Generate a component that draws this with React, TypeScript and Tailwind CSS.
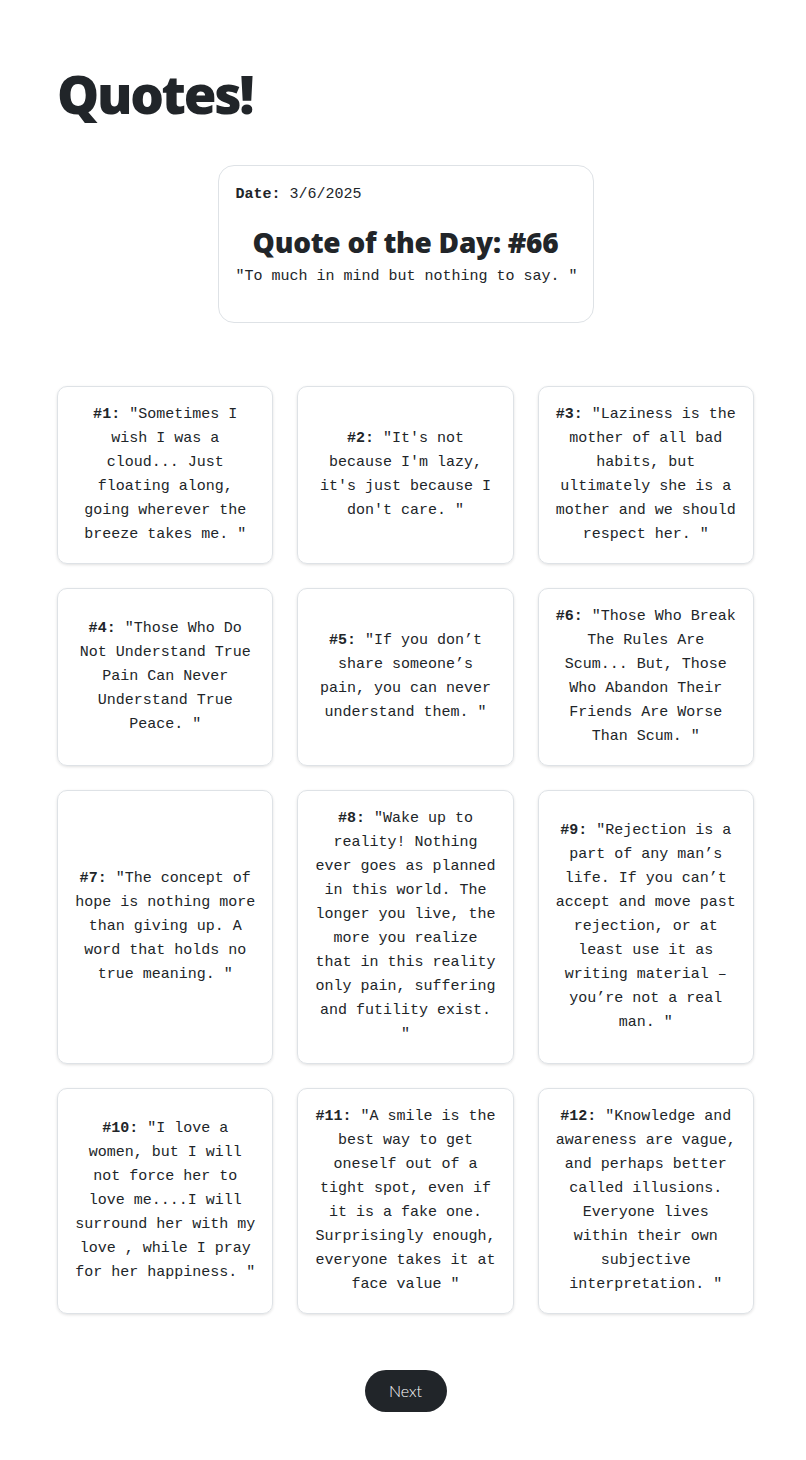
const QUOTES: string[] = [
  "Sometimes I wish I was a cloud... Just floating along, going wherever the breeze takes me.",
  "It's not because I'm lazy, it's just because I don't care.",
  "Laziness is the mother of all bad habits, but ultimately she is a mother and we should respect her.",
  "Those Who Do Not Understand True Pain Can Never Understand True Peace.",
  "If you don’t share someone’s pain, you can never understand them.",
  "Those Who Break The Rules Are Scum... But, Those Who Abandon Their Friends Are Worse Than Scum.",
  "The concept of hope is nothing more than giving up. A word that holds no true meaning.",
  "Wake up to reality! Nothing ever goes as planned in this world. The longer you live, the more you realize that in this reality only pain, suffering and futility exist.",
  "Rejection is a part of any man’s life. If you can’t accept and move past rejection, or at least use it as writing material – you’re not a real man.",
  "I love a women, but I will not force her to love me....I will surround her with my love , while I pray for her happiness.",
  "A smile is the best way to get oneself out of a tight spot, even if it is a fake one. Surprisingly enough, everyone takes it at face value",
  "Knowledge and awareness are vague, and perhaps better called illusions. Everyone lives within their own subjective interpretation.",
];

const mono = "font-['Liberation_Mono','DejaVu_Sans_Mono',monospace]";

export default function App() {
  return (
    <div className="min-h-[1460px] bg-white text-[#212529] pl-[57px] pr-[52px] pt-[62px] pb-[48px]">
      <h1 className="font-['Noto_Sans',sans-serif] font-black text-[53px] leading-[1.2] tracking-[-2.3px]">Quotes!</h1>

      <div className={`${mono} mx-auto mt-[39px] w-[376px] rounded-[16px] border border-[#dee2e6] px-[17px] pt-[17px] pb-[33px] text-[15px] leading-[24px]`}>
        <div>
          <span className="font-bold">Date:</span> 3/6/2025
        </div>
        <h2 className="mt-[18px] text-center font-['Noto_Sans',sans-serif] font-black text-[28px] leading-[34px] tracking-[-0.25px]">
          Quote of the Day: #66
        </h2>
        <p className="mt-[6px] text-center whitespace-nowrap">"To much in mind but nothing to say. "</p>
      </div>

      <div className="mt-[63px] grid grid-cols-3 gap-x-[24px] gap-y-[24px]">
        {QUOTES.map((q, i) => (
          <div
            key={i}
            className={`${mono} flex items-center justify-center rounded-[10px] border border-[#dee2e6] p-[16px] text-center text-[15px] leading-[24px] shadow-[0_1px_3px_rgba(0,0,0,0.12)]`}
          >
            <p>
              <span className="font-bold">#{i + 1}:</span> "{q} "
            </p>
          </div>
        ))}
      </div>

      <div className="mt-[56px] flex justify-center">
        <button className="h-[42px] w-[82px] rounded-full bg-[#212529] font-['Lato',sans-serif] font-light text-[16px] text-white">
          Next
        </button>
      </div>
    </div>
  );
}
